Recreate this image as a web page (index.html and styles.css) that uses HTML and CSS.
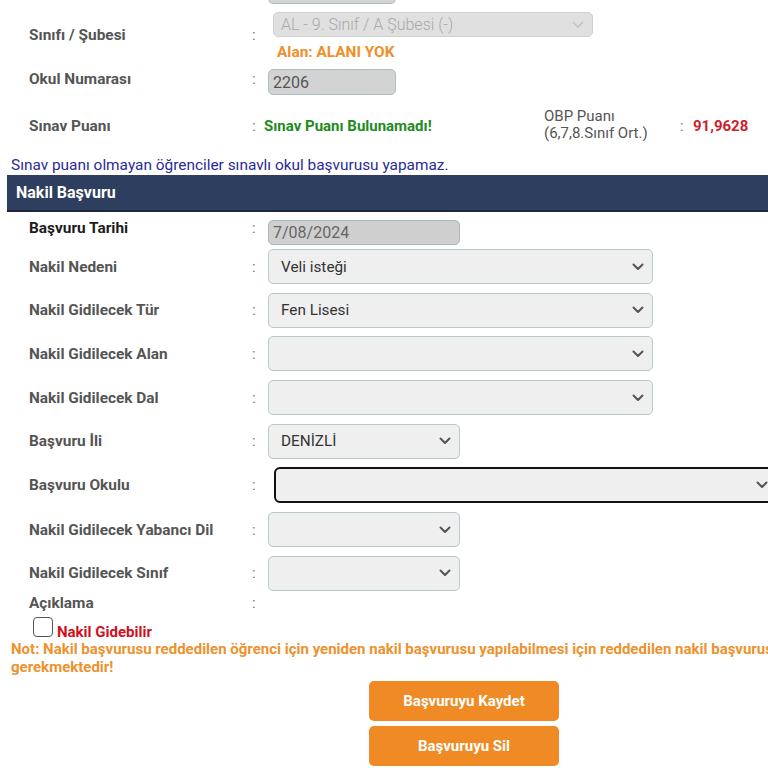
FILE: index.html
```html
<!DOCTYPE html>
<html lang="tr">
<head>
<meta charset="utf-8">
<title>Nakil Başvuru</title>
<link rel="stylesheet" href="styles.css">
</head>
<body>
<div class="page">
  <div class="row row-prev">
    <div class="label"></div><div class="colon"></div>
    <div class="field"><div class="input input-prev"></div></div>
  </div>

  <div class="row row-sinif">
    <div class="label">Sınıfı / Şubesi</div><div class="colon">:</div>
    <div class="field field-col">
      <div class="select select-disabled"><span>AL - 9. Sınıf / A Şubesi (-)</span><svg class="chev chev-light" viewBox="0 0 12 8"><path d="M1.5 1.5 6 6l4.5-4.5"/></svg></div>
      <div class="alan">Alan: ALANI YOK</div>
    </div>
  </div>

  <div class="row row-okulno">
    <div class="label">Okul Numarası</div><div class="colon">:</div>
    <div class="field"><div class="input input-no">2206</div></div>
  </div>

  <div class="row row-puan">
    <div class="label">Sınav Puanı</div><div class="colon">:</div>
    <div class="field field-puan">
      <span class="green">Sınav Puanı Bulunamadı!</span>
      <span class="obp">OBP Puanı<br>(6,7,8.Sınıf Ort.)</span>
      <span class="colon2">:</span>
      <span class="red">91,9628</span>
    </div>
  </div>

  <div class="info">Sınav puanı olmayan öğrenciler sınavlı okul başvurusu yapamaz.</div>

  <div class="header">Nakil Başvuru</div>

  <div class="row row-tarih">
    <div class="label label-dark">Başvuru Tarihi</div><div class="colon">:</div>
    <div class="field"><div class="input input-date">7/08/2024</div></div>
  </div>

  <div class="selects">
    <div class="row row-sel">
      <div class="label">Nakil Nedeni</div><div class="colon">:</div>
      <div class="field"><div class="select select-wide"><span>Veli isteği</span><svg class="chev" viewBox="0 0 12 8"><path d="M1.5 1.5 6 6l4.5-4.5"/></svg></div></div>
    </div>
    <div class="row row-sel">
      <div class="label">Nakil Gidilecek Tür</div><div class="colon">:</div>
      <div class="field"><div class="select select-wide"><span>Fen Lisesi</span><svg class="chev" viewBox="0 0 12 8"><path d="M1.5 1.5 6 6l4.5-4.5"/></svg></div></div>
    </div>
    <div class="row row-sel">
      <div class="label">Nakil Gidilecek Alan</div><div class="colon">:</div>
      <div class="field"><div class="select select-wide"><span></span><svg class="chev" viewBox="0 0 12 8"><path d="M1.5 1.5 6 6l4.5-4.5"/></svg></div></div>
    </div>
    <div class="row row-sel">
      <div class="label">Nakil Gidilecek Dal</div><div class="colon">:</div>
      <div class="field"><div class="select select-wide"><span></span><svg class="chev" viewBox="0 0 12 8"><path d="M1.5 1.5 6 6l4.5-4.5"/></svg></div></div>
    </div>
    <div class="row row-sel">
      <div class="label">Başvuru İli</div><div class="colon">:</div>
      <div class="field"><div class="select select-small"><span>DENİZLİ</span><svg class="chev" viewBox="0 0 12 8"><path d="M1.5 1.5 6 6l4.5-4.5"/></svg></div></div>
    </div>
    <div class="row row-sel">
      <div class="label">Başvuru Okulu</div><div class="colon">:</div>
      <div class="field"><div class="select select-focus"><span></span><svg class="chev" viewBox="0 0 12 8"><path d="M1.5 1.5 6 6l4.5-4.5"/></svg></div></div>
    </div>
    <div class="row row-sel">
      <div class="label">Nakil Gidilecek Yabancı Dil</div><div class="colon">:</div>
      <div class="field"><div class="select select-small"><span></span><svg class="chev" viewBox="0 0 12 8"><path d="M1.5 1.5 6 6l4.5-4.5"/></svg></div></div>
    </div>
    <div class="row row-sel">
      <div class="label">Nakil Gidilecek Sınıf</div><div class="colon">:</div>
      <div class="field"><div class="select select-small"><span></span><svg class="chev" viewBox="0 0 12 8"><path d="M1.5 1.5 6 6l4.5-4.5"/></svg></div></div>
    </div>
  </div>

  <div class="row row-aciklama">
    <div class="label">Açıklama</div><div class="colon">:</div>
    <div class="field"></div>
  </div>

  <label class="check"><span class="box"></span><span class="check-text">Nakil Gidebilir</span></label>

  <div class="note">Not: Nakil başvurusu reddedilen öğrenci için yeniden nakil başvurusu yapılabilmesi için reddedilen nakil başvurusunun silinmesi gerekmektedir!</div>

  <div class="buttons">
    <button class="btn">Başvuruyu Kaydet</button>
    <button class="btn">Başvuruyu Sil</button>
  </div>
</div>
</body>
</html>
```

FILE: styles.css
```css
html, body {
  margin: 0;
  padding: 0;
  overflow: hidden;
  background: #ffffff;
}
body {
  font-family: Roboto, "Liberation Sans", Arial, sans-serif;
  color: #333;
}
.page {
  width: 914px;
  margin-left: 7px;
  display: flex;
  flex-direction: column;
}
.row {
  display: grid;
  grid-template-columns: 223px 16px auto;
  align-items: center;
  padding-left: 22px;
}
.label {
  font-size: 15.4px;
  font-weight: 700;
  color: #555;
  line-height: 18px;
}
.label-dark { color: #1c1c1c; }
.colon {
  font-size: 15px;
  color: #777;
  line-height: 18px;
}
.field { display: flex; align-items: center; }
.field-col { flex-direction: column; align-items: flex-start; }

.input {
  box-sizing: border-box;
  height: 26px;
  border-radius: 5px;
  border: 1.5px solid #aebfc3;
  background: #d3d3d3;
  font-size: 16px;
  color: #555;
  padding: 0 4px;
  display: flex;
  align-items: center;
}
.row-prev { margin-top: -22px; }
.input-prev { width: 128px; }
.input-no { width: 128px; }
.input-date { width: 192px; height: 25px; background: #cfcfcf; color: #666; border-color: #aab6ba; }

.select {
  box-sizing: border-box;
  height: 35px;
  border-radius: 5px;
  border: 1.5px solid #b7c9cd;
  background: #efefef;
  display: flex;
  align-items: center;
  justify-content: space-between;
  padding: 0 8px 0 12px;
  font-size: 15.3px;
  color: #333;
}
.select-wide { width: 385px; }
.select-small { width: 192px; }
.select-focus {
  width: 504px;
  margin-left: 6px;
  height: 36px;
  border: 2px solid #111;
  border-radius: 6px;
}
.select-disabled {
  width: 320px;
  height: 25px;
  margin-left: 5px;
  background: #e0e0e0;
  border-color: #d0d0d0;
  color: #a9a9a9;
  font-size: 16px;
  padding-left: 7px;
  font-weight: 300;
}
.chev {
  width: 12px;
  height: 8px;
  flex: none;
}
.chev path {
  fill: none;
  stroke: #555;
  stroke-width: 2;
  stroke-linecap: round;
  stroke-linejoin: round;
}
.chev-light path { stroke: #c3c3c3; stroke-width: 1.6; }

.alan {
  margin-top: 6px;
  margin-left: 9px;
  font-size: 15.4px;
  font-weight: 700;
  color: #ee8f2a;
  line-height: 18px;
}
.row-sinif { margin-top: 8px; }
.row-sinif .label, .row-sinif .colon { margin-top: -4px; }
.row-okulno { margin-top: 8px; }
.row-okulno .label, .row-okulno .colon { margin-top: -6px; }
.row-puan { margin-top: 13px; height: 36px; }
.field-puan { margin-left: -4px; }
.green {
  font-size: 15px;
  font-weight: 700;
  color: #1f8a22;
  width: 280px;
  flex: none;
}
.obp {
  font-size: 15px;
  color: #555;
  line-height: 17px;
  width: 136px;
  flex: none;
  margin-top: -2px;
}
.colon2 {
  font-size: 15px;
  color: #777;
  width: 13px;
  flex: none;
}
.red {
  font-size: 15px;
  font-weight: 700;
  color: #cc1f2c;
}
.info {
  margin-top: 12px;
  padding-left: 4px;
  font-size: 15.4px;
  line-height: 18px;
  color: #2a2a9a;
}
.header {
  margin-top: 1px;
  box-sizing: border-box;
  height: 37px;
  background: #2e3e5e;
  border-bottom: 2px solid #1d283f;
  color: #fff;
  font-size: 16px;
  font-weight: 700;
  padding-left: 9px;
  display: flex;
  align-items: center;
}
.row-tarih { margin-top: 8px; align-items: start; }
.row-tarih .label, .row-tarih .colon { margin-top: -1px; }
.selects {
  margin-top: 4px;
  display: flex;
  flex-direction: column;
  gap: 8.7px;
}
.row-aciklama { margin-top: 3px; height: 18px; }
.check {
  margin-top: 5px;
  margin-left: 26px;
  display: flex;
  align-items: flex-end;
  height: 20px;
}
.box {
  box-sizing: border-box;
  width: 20px;
  height: 20px;
  border: 1.5px solid #555;
  border-radius: 4px;
  background: #fff;
  flex: none;
}
.check-text {
  margin-left: 4px;
  font-size: 15px;
  font-weight: 700;
  color: #d0101c;
  line-height: 16px;
  margin-bottom: -3px;
}
.note {
  margin-top: 3px;
  padding-left: 4px;
  font-size: 15px;
  font-weight: 700;
  color: #ec922e;
  line-height: 18px;
}
.buttons {
  margin-top: 5px;
  display: flex;
  flex-direction: column;
  align-items: center;
  gap: 5px;
}
.btn {
  width: 190px;
  height: 40px;
  border: none;
  border-radius: 5px;
  background: #ef8a25;
  color: #fff;
  font-family: Roboto, "Liberation Sans", Arial, sans-serif;
  font-size: 15px;
  font-weight: 700;
}
```
